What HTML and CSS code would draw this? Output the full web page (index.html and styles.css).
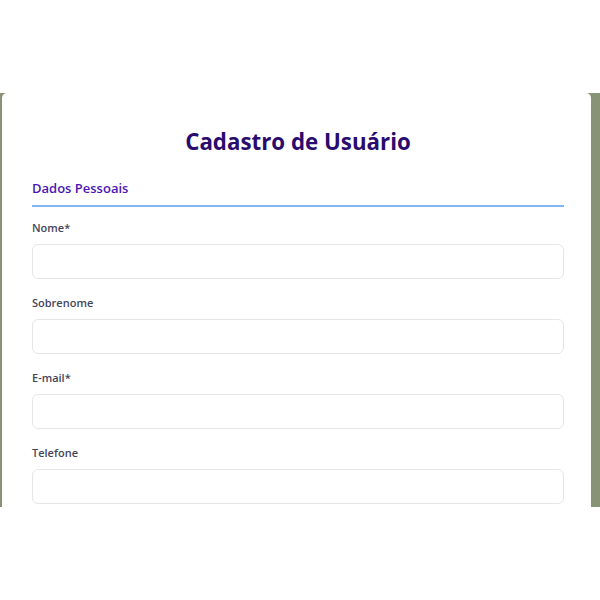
FILE: index.html
```html
<!DOCTYPE html>
<html lang="pt-BR">
<head>
<meta charset="utf-8">
<title>Cadastro de Usuário</title>
<link rel="stylesheet" href="styles.css">
</head>
<body>
<div class="frame">
  <div class="card">
    <h1 class="title">Cadastro de Usuário</h1>
    <h2 class="section">Dados Pessoais</h2>
    <form class="form">
      <div class="field">
        <label class="label">Nome*</label>
        <input class="input" type="text">
      </div>
      <div class="field">
        <label class="label">Sobrenome</label>
        <input class="input" type="text">
      </div>
      <div class="field">
        <label class="label">E-mail*</label>
        <input class="input" type="email">
      </div>
      <div class="field">
        <label class="label">Telefone</label>
        <input class="input" type="tel">
      </div>
    </form>
  </div>
</div>
</body>
</html>
```
FILE: styles.css
```css
html, body {
  margin: 0;
  padding: 0;
  background: #ffffff;
}
body {
  font-family: "Open Sans", "Noto Sans", sans-serif;
}
.frame {
  margin-top: 93px;
  height: 414px;
  background: #889276;
  overflow: hidden;
  padding: 0 9px 0 2px;
}
.card {
  background: #ffffff;
  border-radius: 5px 5px 0 0;
  padding: 28px 27px 0 30px;
  height: 100%;
  box-sizing: border-box;
}
.title {
  margin: 0;
  text-align: center;
  font-size: 22.3px;
  font-weight: 700;
  color: #2a0c6e;
  line-height: 42px;
}
.section {
  margin: 15px 0 0;
  font-size: 13px;
  font-weight: 600;
  color: #4b16b0;
  line-height: 20px;
  padding-bottom: 7px;
  border-bottom: 2px solid #82b4f8;
}
.form {
  display: flex;
  flex-direction: column;
  gap: 14px;
  margin-top: 11px;
}
.field {
  display: flex;
  flex-direction: column;
  gap: 6px;
}
.label {
  font-size: 11px;
  font-weight: 600;
  color: #45455a;
  line-height: 20px;
}
.input {
  height: 35px;
  box-sizing: border-box;
  border: 1px solid #e6e6e8;
  border-radius: 6px;
  background: #fff;
  margin: 0;
}
```
